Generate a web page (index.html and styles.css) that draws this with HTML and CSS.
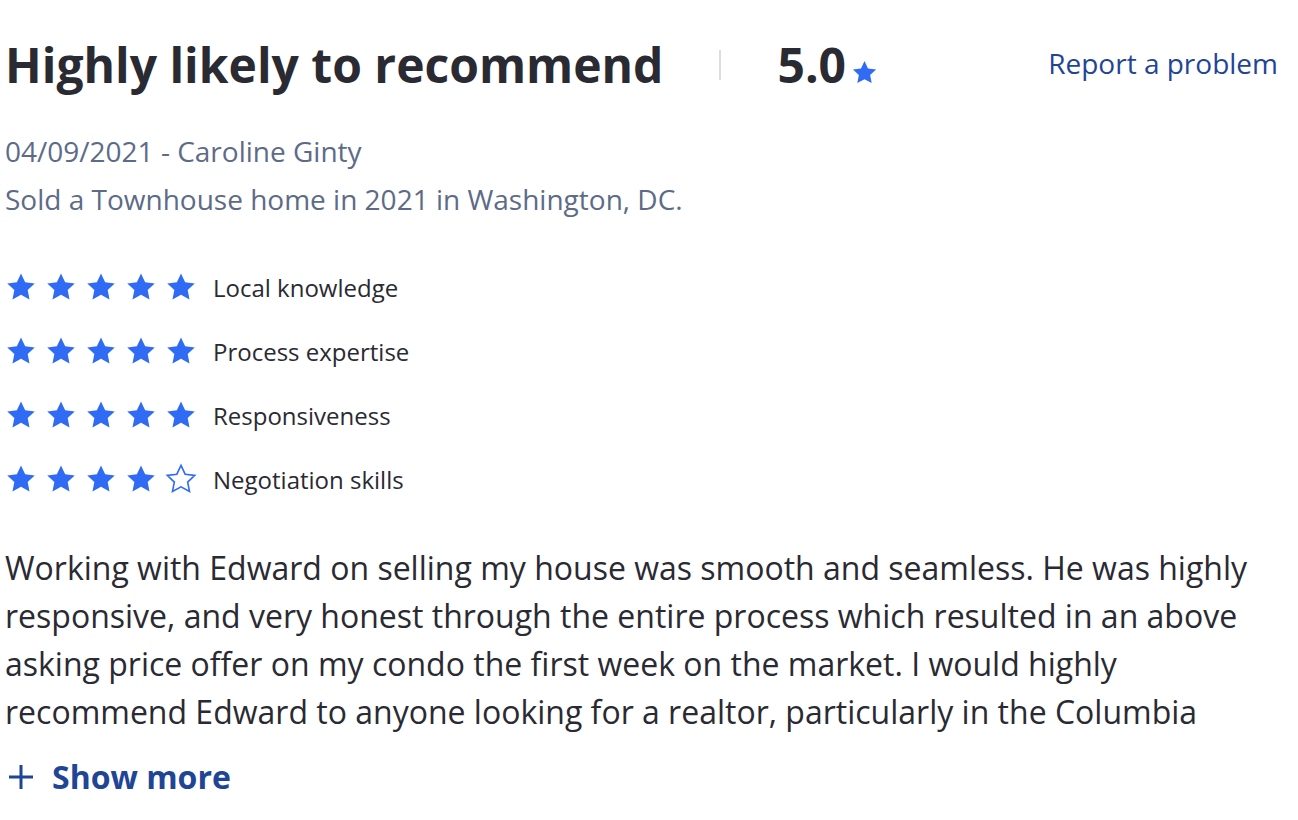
FILE: index.html
```html
<!DOCTYPE html>
<html>
<head>
<meta charset="utf-8">
<link rel="stylesheet" href="styles.css">
</head>
<body>
<div class="review">
  <div class="header">
    <div class="title-group">
      <h1 class="title">Highly likely to recommend</h1>
      <span class="sep"></span>
      <span class="score">5.0</span>
      <svg class="score-star" viewBox="0 0 24 24"><path d="M12 1.8l3.1 6.6 7.2.9-5.3 5 1.4 7.1L12 17.9l-6.4 3.5 1.4-7.1-5.3-5 7.2-.9z" fill="#2f6bf4"/></svg>
    </div>
    <a class="report">Report a problem</a>
  </div>
  <div class="meta-block">
    <div class="meta">04/09/2021 - Caroline Ginty</div>
    <div class="meta">Sold a Townhouse home in 2021 in Washington, DC.</div>
  </div>
  <div class="ratings">
    <div class="rating-row">
      <div class="stars">
        <svg class="star" viewBox="0 0 24 24"><path d="M12 1.8l3.1 6.6 7.2.9-5.3 5 1.4 7.1L12 17.9l-6.4 3.5 1.4-7.1-5.3-5 7.2-.9z"/></svg>
        <svg class="star" viewBox="0 0 24 24"><path d="M12 1.8l3.1 6.6 7.2.9-5.3 5 1.4 7.1L12 17.9l-6.4 3.5 1.4-7.1-5.3-5 7.2-.9z"/></svg>
        <svg class="star" viewBox="0 0 24 24"><path d="M12 1.8l3.1 6.6 7.2.9-5.3 5 1.4 7.1L12 17.9l-6.4 3.5 1.4-7.1-5.3-5 7.2-.9z"/></svg>
        <svg class="star" viewBox="0 0 24 24"><path d="M12 1.8l3.1 6.6 7.2.9-5.3 5 1.4 7.1L12 17.9l-6.4 3.5 1.4-7.1-5.3-5 7.2-.9z"/></svg>
        <svg class="star" viewBox="0 0 24 24"><path d="M12 1.8l3.1 6.6 7.2.9-5.3 5 1.4 7.1L12 17.9l-6.4 3.5 1.4-7.1-5.3-5 7.2-.9z"/></svg>
      </div>
      <span class="label">Local knowledge</span>
    </div>
    <div class="rating-row">
      <div class="stars">
        <svg class="star" viewBox="0 0 24 24"><path d="M12 1.8l3.1 6.6 7.2.9-5.3 5 1.4 7.1L12 17.9l-6.4 3.5 1.4-7.1-5.3-5 7.2-.9z"/></svg>
        <svg class="star" viewBox="0 0 24 24"><path d="M12 1.8l3.1 6.6 7.2.9-5.3 5 1.4 7.1L12 17.9l-6.4 3.5 1.4-7.1-5.3-5 7.2-.9z"/></svg>
        <svg class="star" viewBox="0 0 24 24"><path d="M12 1.8l3.1 6.6 7.2.9-5.3 5 1.4 7.1L12 17.9l-6.4 3.5 1.4-7.1-5.3-5 7.2-.9z"/></svg>
        <svg class="star" viewBox="0 0 24 24"><path d="M12 1.8l3.1 6.6 7.2.9-5.3 5 1.4 7.1L12 17.9l-6.4 3.5 1.4-7.1-5.3-5 7.2-.9z"/></svg>
        <svg class="star" viewBox="0 0 24 24"><path d="M12 1.8l3.1 6.6 7.2.9-5.3 5 1.4 7.1L12 17.9l-6.4 3.5 1.4-7.1-5.3-5 7.2-.9z"/></svg>
      </div>
      <span class="label">Process expertise</span>
    </div>
    <div class="rating-row">
      <div class="stars">
        <svg class="star" viewBox="0 0 24 24"><path d="M12 1.8l3.1 6.6 7.2.9-5.3 5 1.4 7.1L12 17.9l-6.4 3.5 1.4-7.1-5.3-5 7.2-.9z"/></svg>
        <svg class="star" viewBox="0 0 24 24"><path d="M12 1.8l3.1 6.6 7.2.9-5.3 5 1.4 7.1L12 17.9l-6.4 3.5 1.4-7.1-5.3-5 7.2-.9z"/></svg>
        <svg class="star" viewBox="0 0 24 24"><path d="M12 1.8l3.1 6.6 7.2.9-5.3 5 1.4 7.1L12 17.9l-6.4 3.5 1.4-7.1-5.3-5 7.2-.9z"/></svg>
        <svg class="star" viewBox="0 0 24 24"><path d="M12 1.8l3.1 6.6 7.2.9-5.3 5 1.4 7.1L12 17.9l-6.4 3.5 1.4-7.1-5.3-5 7.2-.9z"/></svg>
        <svg class="star" viewBox="0 0 24 24"><path d="M12 1.8l3.1 6.6 7.2.9-5.3 5 1.4 7.1L12 17.9l-6.4 3.5 1.4-7.1-5.3-5 7.2-.9z"/></svg>
      </div>
      <span class="label">Responsiveness</span>
    </div>
    <div class="rating-row">
      <div class="stars">
        <svg class="star" viewBox="0 0 24 24"><path d="M12 1.8l3.1 6.6 7.2.9-5.3 5 1.4 7.1L12 17.9l-6.4 3.5 1.4-7.1-5.3-5 7.2-.9z"/></svg>
        <svg class="star" viewBox="0 0 24 24"><path d="M12 1.8l3.1 6.6 7.2.9-5.3 5 1.4 7.1L12 17.9l-6.4 3.5 1.4-7.1-5.3-5 7.2-.9z"/></svg>
        <svg class="star" viewBox="0 0 24 24"><path d="M12 1.8l3.1 6.6 7.2.9-5.3 5 1.4 7.1L12 17.9l-6.4 3.5 1.4-7.1-5.3-5 7.2-.9z"/></svg>
        <svg class="star" viewBox="0 0 24 24"><path d="M12 1.8l3.1 6.6 7.2.9-5.3 5 1.4 7.1L12 17.9l-6.4 3.5 1.4-7.1-5.3-5 7.2-.9z"/></svg>
        <svg class="star empty" viewBox="0 0 24 24"><path d="M12 1.8l3.1 6.6 7.2.9-5.3 5 1.4 7.1L12 17.9l-6.4 3.5 1.4-7.1-5.3-5 7.2-.9z"/></svg>
      </div>
      <span class="label">Negotiation skills</span>
    </div>
  </div>
  <p class="body">Working with Edward on selling my house was smooth and seamless. He was highly responsive, and very honest through the entire process which resulted in an above asking price offer on my condo the first week on the market. I would highly recommend Edward to anyone looking for a realtor, particularly in the Columbia</p>
  <a class="show-more">
    <svg class="plus" viewBox="0 0 26 26"><path d="M13 1v24M1 13h24" stroke="#1f4596" stroke-width="3" fill="none"/></svg>
    <span>Show more</span>
  </a>
</div>
</body>
</html>
```

FILE: styles.css
```css
html, body {
  margin: 0;
  padding: 0;
  background: #ffffff;
}
body {
  font-family: "Open Sans", "Liberation Sans", sans-serif;
  color: #2a2a33;
}
.review {
  padding: 30px 20px 0 5px;
}
.header {
  display: flex;
  align-items: center;
  justify-content: space-between;
  height: 70px;
}
.title-group {
  display: flex;
  align-items: center;
}
.title {
  margin: 0;
  font-size: 48px;
  font-weight: 700;
  line-height: 70px;
  color: #2a2a33;
}
.sep {
  width: 2px;
  height: 30px;
  background: #dcdce0;
  margin: 0 56px 0 56px;
}
.score {
  font-size: 48px;
  font-weight: 700;
  line-height: 70px;
}
.score-star {
  width: 27px;
  height: 27px;
  margin: 14px 0 0 5px;
}
.report {
  font-size: 28px;
  color: #1f4596;
  line-height: 40px;
  margin-top: -4px;
}
.meta-block {
  margin-top: 27px;
}
.meta {
  font-size: 28px;
  line-height: 48px;
  color: #5d6b87;
}
.ratings {
  margin-top: 46px;
  display: flex;
  flex-direction: column;
  gap: 28px;
}
.rating-row {
  display: flex;
  align-items: center;
  height: 36px;
}
.stars {
  display: flex;
  gap: 8px;
  margin-left: 0;
}
.star {
  width: 32px;
  height: 32px;
  fill: #2f6bf4;
}
.star.empty {
  fill: none;
  stroke: #2f6bf4;
  stroke-width: 1.2;
}
.label {
  margin-left: 16px;
  font-size: 24px;
  color: #2a2a33;
}
.body {
  margin: 47px 0 0 0;
  font-size: 32px;
  line-height: 48px;
  color: #2a2a33;
}
.show-more {
  display: flex;
  align-items: center;
  margin-top: 19px;
  color: #1f4596;
  font-size: 32px;
  font-weight: 700;
}
.plus {
  width: 26px;
  height: 26px;
  margin: 0 18px 0 3px;
}
```
